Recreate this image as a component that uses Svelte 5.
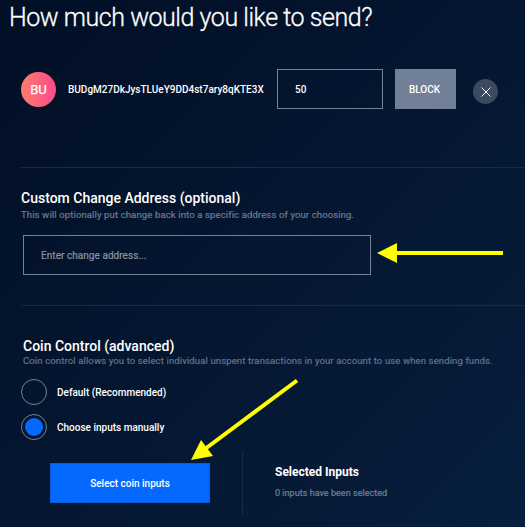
<script>
  let address = $state('');
  let amount = $state('50');
  let mode = $state('manual');
</script>

<main>
  <h1>How much would you like to send?</h1>

  <section class="recipient">
    <div class="avatar">BU</div>
    <span class="hash">BUDgM27DkJysTLUeY9DD4st7ary8qKTE3X</span>
    <input class="amount" bind:value={amount} aria-label="Amount" />
    <button class="token">BLOCK</button>
    <button class="remove" aria-label="Remove recipient">
      <svg width="25" height="25" viewBox="0 0 25 25"><path d="M8.5 8.5l9 9M17.5 8.5l-9 9" /></svg>
    </button>
  </section>

  <section class="change">
    <h2>Custom Change Address (optional)</h2>
    <p class="hint">This will optionally put change back into a specific address of your choosing.</p>
    <input class="address" bind:value={address} placeholder="Enter change address..." />
  </section>

  <section class="control">
    <h2>Coin Control (advanced)</h2>
    <p class="hint wide">Coin control allows you to select individual unspent transactions in your account to use when sending funds.</p>
    <div class="options">
      <button class="option" onclick={() => (mode = 'default')}>
        <span class="radio" class:on={mode === 'default'}></span>
        <span class="first">Default (Recommended)</span>
      </button>
      <button class="option" onclick={() => (mode = 'manual')}>
        <span class="radio" class:on={mode === 'manual'}></span>
        <span class="second">Choose inputs manually</span>
      </button>
    </div>
    <div class="selection">
      <button class="select">Select coin inputs</button>
      <div class="summary">
        <h3>Selected Inputs</h3>
        <p>0 inputs have been selected</p>
      </div>
    </div>
  </section>

  <svg class="arrows" width="525" height="527" viewBox="0 0 525 527">
    <path d="M503 253H394" />
    <polygon points="377,253 397,243 397,263" />
    <path d="M297 380.5L205 449" />
    <polygon points="191,460 201,440 213,456" />
  </svg>
</main>

<style>
  :global(body) { margin: 0; background: #03132c; }
  main {
    position: relative;
    box-sizing: border-box;
    width: 525px;
    height: 527px;
    overflow: hidden;
    background: linear-gradient(135deg, #010f25 0%, #051631 50%, #071e3e 100%);
    color: #fff;
    font-family: Roboto, sans-serif;
  }
  h1, h2, h3, p { margin: 0; white-space: nowrap; }
  button, input {
    box-sizing: border-box;
    border: 0;
    border-radius: 0;
    padding: 0;
    background: none;
    color: inherit;
    font: inherit;
    outline: none;
  }
  h1 {
    height: 69px;
    padding: 3px 0 0 9px;
    box-sizing: border-box;
    font-size: 25px;
    line-height: 29px;
    font-weight: 300;
    letter-spacing: -0.46px;
    -webkit-text-stroke: 0.3px #fff;
  }
  .recipient {
    display: flex;
    align-items: flex-start;
    height: 98px;
    margin-left: 21px;
  }
  .avatar {
    flex: none;
    width: 35px;
    height: 35px;
    margin-top: 3px;
    border-radius: 50%;
    background: linear-gradient(90deg, #ff7c6d, #f94a8b);
    font-size: 13px;
    line-height: 36px;
    font-weight: 400;
    -webkit-text-stroke: 0.25px #fff;
    text-align: center;
  }
  .hash {
    width: 209px;
    margin-left: 12px;
    font-size: 10px;
    line-height: 41px;
    font-weight: 500;
    white-space: nowrap;
  }
  .amount {
    width: 106px;
    height: 40px;
    padding: 1px 17px 0;
    border: 1px solid #73839a;
    font-size: 10px;
    font-weight: 500;
  }
  .token {
    width: 61px;
    height: 40px;
    margin-left: 12px;
    padding: 1px 2px 0 0;
    background: #718096;
    font-size: 10px;
    font-weight: 500;
  }
  .remove {
    width: 25px;
    height: 25px;
    margin: 10px 0 0 17px;
    border-radius: 50%;
    background: #3b4a5f;
  }
  .remove svg { display: block; }
  .remove path { stroke: #fff; stroke-width: 1; }
  .change {
    height: 138px;
    margin-left: 21px;
    padding-top: 22px;
    box-sizing: border-box;
    border-top: 1px solid #1a2a42;
  }
  h2 {
    font-size: 14px;
    line-height: 17px;
    font-weight: 500;
  }
  .hint {
    color: #6c7b92;
    font-size: 9.5px;
    line-height: 16px;
    letter-spacing: 0.13px;
    -webkit-text-stroke: 0.2px currentColor;
  }
  .address {
    display: block;
    width: 348px;
    height: 40px;
    margin: 12px 0 0 2px;
    padding: 1px 17px 0;
    border: 1px solid #73839a;
    font-size: 10px;
    letter-spacing: 0.05px;
  }
  .address::placeholder { color: #8a939f; opacity: 1; -webkit-text-stroke: 0.2px #8a939f; }
  .control {
    margin-left: 21px;
    padding-top: 32px;
    border-top: 1px solid #1a2a42;
  }
  .control h2, .control .hint { margin-left: 2px; }
  .control .hint { line-height: 11px; padding-bottom: 2px; color: #647389; }
  .options {
    display: flex;
    flex-direction: column;
    gap: 9px;
    margin-top: 11px;
  }
  .option {
    display: flex;
    align-items: center;
    gap: 10px;
    height: 26px;
    font-size: 10px;
    font-weight: 500;
    white-space: nowrap;
  }
  .radio {
    box-sizing: border-box;
    width: 26px;
    height: 26px;
    padding: 3px;
    border: 1px solid #73839a;
    border-radius: 50%;
  }
  .radio.on::before {
    content: '';
    display: block;
    width: 18px;
    height: 18px;
    border-radius: 50%;
    background: #0569ff;
  }
  .selection {
    display: flex;
    margin: 11px 0 0 29px;
  }
  .select {
    width: 160px;
    height: 40px;
    margin-top: 12px;
    border: 1px solid #075cdd;
    background: #0569ff;
    font-size: 10px;
    font-weight: 500;
  }
  .summary {
    box-sizing: border-box;
    height: 64px;
    margin-left: 32px;
    padding: 13px 0 0 32px;
    border-left: 1px solid #1a2a42;
  }
  h3 {
    font-size: 12px;
    line-height: 16px;
    font-weight: 700;
  }
  .summary p {
    margin-top: 5px;
    color: #718096;
    font-size: 9px;
    line-height: 16px;
    letter-spacing: 0.04px;
    -webkit-text-stroke: 0.2px currentColor;
  }
  .arrows {
    position: absolute;
    inset: 0;
    pointer-events: none;
    fill: #ff0;
  }
  .arrows path { stroke: #ff0; stroke-width: 4; fill: none; }
</style>
